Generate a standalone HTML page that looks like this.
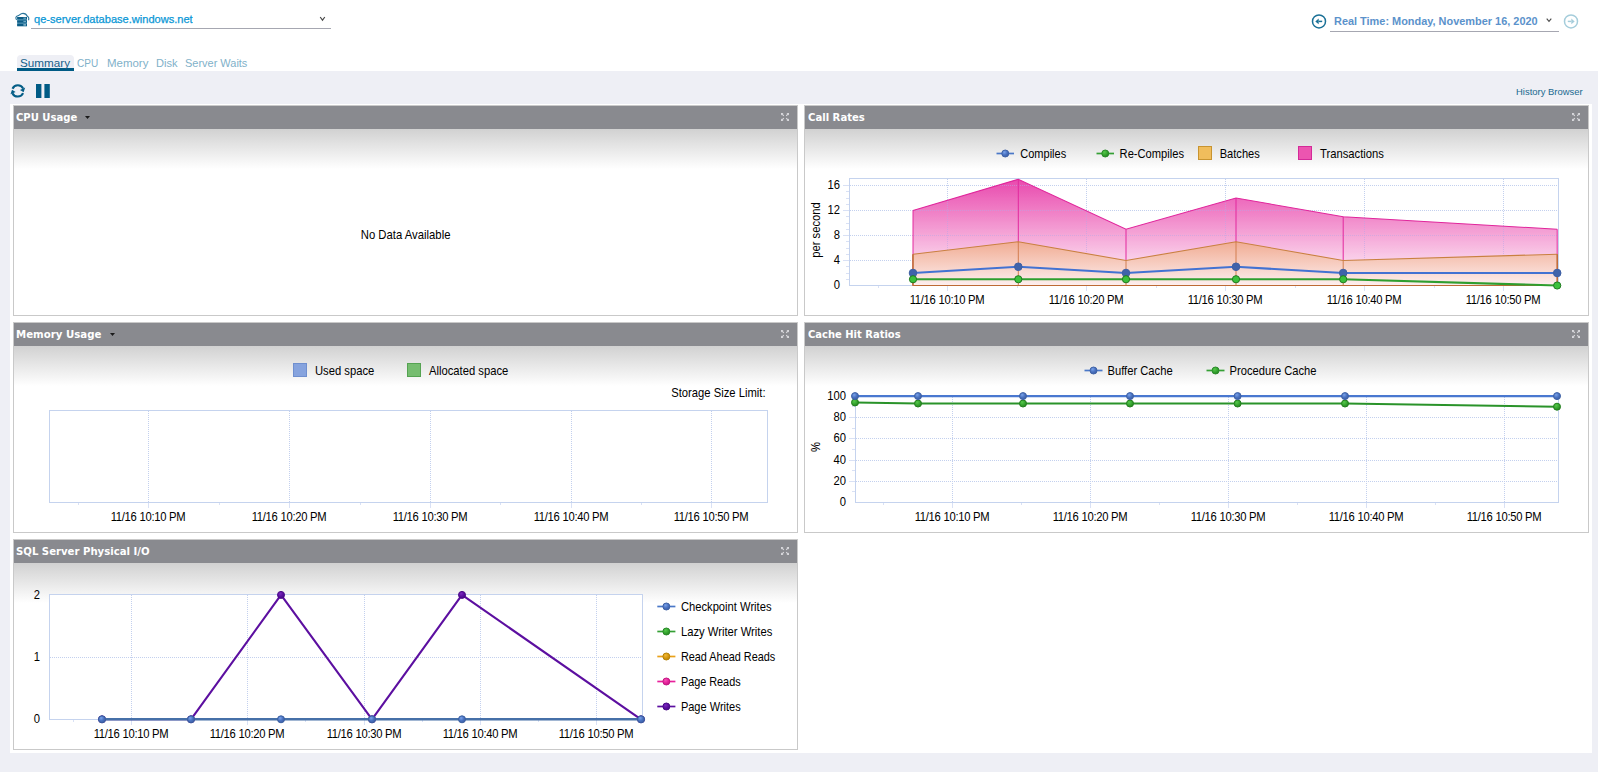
<!DOCTYPE html><html><head><meta charset="utf-8"><title>Summary</title><style>
html,body{margin:0;padding:0}
body{width:1598px;height:772px;overflow:hidden;background:#eeeff5;position:relative;font-family:"Liberation Sans", Arial, sans-serif;}
.abs{position:absolute}
#top{left:0;top:0;width:1598px;height:71px;background:#fff}
#wrap{left:10px;top:104px;width:1582px;height:649px;background:#fff}
.panel{position:absolute;width:783px;height:209px;border:1px solid #c9c9c9;background:#fff;overflow:hidden}
.ph{position:absolute;left:0;top:0;width:100%;height:23px;background:#898a8f}
.pb{position:absolute;left:0;top:23px;width:100%;height:40px;background:linear-gradient(#d1d1d1,#fff)}
.pt{position:absolute;height:23px;line-height:22px;font-family:"DejaVu Sans Condensed", "DejaVu Sans", sans-serif;font-weight:bold;font-size:11px;color:#fff;white-space:nowrap}
.tab{position:absolute;top:56px;height:14px;line-height:14px;font-size:11.5px;color:#7fb1c9;white-space:nowrap}
svg text{font-family:"Liberation Sans", Arial, sans-serif;font-size:11.25px;fill:#000}
svg text.xl{letter-spacing:-0.27px}
</style></head><body>
<div id="top" class="abs"></div>
<div class="abs" id="srv" style="left:34.13px;transform:scaleX(1.0059);transform-origin:0 0;top:12px;font-size:11px;line-height:14px;color:#0a97d6;-webkit-text-stroke:0.25px #0a97d6;white-space:nowrap">qe-server.database.windows.net</div>
<div class="abs" style="left:31px;top:28px;width:300px;height:1px;background:#a6a7b1"></div>
<div class="abs" style="left:1330px;top:31px;width:229px;height:1px;background:#a6a7b1"></div>
<div class="abs" id="rt" style="left:1334.06px;transform:scaleX(0.9261);transform-origin:0 0;top:14px;font-size:11.8px;line-height:14px;font-weight:bold;color:#5b92cb;white-space:nowrap">Real Time: Monday, November 16, 2020</div>
<div class="abs" style="left:17px;top:55px;width:57px;height:16px;background:#eeeff5;border-radius:4px 4px 0 0"></div>
<div class="abs" style="left:17px;top:68px;width:57px;height:3px;background:#005b85"></div>
<div class="tab" id="t1" style="left:19.51px;transform:scaleX(1.0158);transform-origin:0 0;;color:#16608a">Summary</div>
<div class="tab" id="t2" style="left:77.41px;transform:scaleX(0.8716);transform-origin:0 0;">CPU</div>
<div class="tab" id="t3" style="left:106.55px;transform:scaleX(0.9960);transform-origin:0 0;">Memory</div>
<div class="tab" id="t4" style="left:155.72px;transform:scaleX(0.9638);transform-origin:0 0;">Disk</div>
<div class="tab" id="t5" style="left:184.61px;transform:scaleX(0.9534);transform-origin:0 0;">Server Waits</div>
<div class="abs" id="hb" style="left:1516.39px;transform:scaleX(0.9641);transform-origin:0 0;top:86px;font-size:9.8px;line-height:12px;color:#1b6a90;white-space:nowrap">History Browser</div>
<div id="wrap" class="abs"></div>
<div class="panel" style="left:13px;top:105px"><div class="ph"></div><div class="pb"></div></div><div class="pt" id="pt0" style="left:16.24px;transform:scaleX(1.0137);transform-origin:0 0;top:107px">CPU Usage</div>
<div class="panel" style="left:804px;top:105px"><div class="ph"></div><div class="pb"></div></div><div class="pt" id="pt1" style="left:808.14px;transform:scaleX(1.0192);transform-origin:0 0;top:107px">Call Rates</div>
<div class="panel" style="left:13px;top:322px"><div class="ph"></div><div class="pb"></div></div><div class="pt" id="pt2" style="left:16.45px;transform:scaleX(1.0304);transform-origin:0 0;top:324px">Memory Usage</div>
<div class="panel" style="left:804px;top:322px"><div class="ph"></div><div class="pb"></div></div><div class="pt" id="pt3" style="left:808.04px;transform:scaleX(1.0073);transform-origin:0 0;top:324px">Cache Hit Ratios</div>
<div class="panel" style="left:13px;top:539px"><div class="ph"></div><div class="pb"></div></div><div class="pt" id="pt4" style="left:16.11px;transform:scaleX(1.0227);transform-origin:0 0;top:541px">SQL Server Physical I/O</div>
<svg class="abs" style="left:0;top:0" width="1598" height="772" viewBox="0 0 1598 772">
<defs>
<radialGradient id="mb" cx="0.38" cy="0.32" r="0.7"><stop offset="0" stop-color="#79a2ea"/><stop offset="0.55" stop-color="#4a72c0"/><stop offset="1" stop-color="#3c5ea6"/></radialGradient>
<radialGradient id="mg" cx="0.38" cy="0.32" r="0.7"><stop offset="0" stop-color="#55c84a"/><stop offset="0.55" stop-color="#37a631"/><stop offset="1" stop-color="#25831f"/></radialGradient>
<radialGradient id="mp" cx="0.38" cy="0.32" r="0.7"><stop offset="0" stop-color="#7a2ac0"/><stop offset="0.55" stop-color="#5c0fa0"/><stop offset="1" stop-color="#480a84"/></radialGradient>
<radialGradient id="mo" cx="0.38" cy="0.32" r="0.7"><stop offset="0" stop-color="#f0b838"/><stop offset="0.55" stop-color="#d89a10"/><stop offset="1" stop-color="#b88408"/></radialGradient>
<radialGradient id="mk" cx="0.38" cy="0.32" r="0.7"><stop offset="0" stop-color="#f455b4"/><stop offset="0.55" stop-color="#e8229c"/><stop offset="1" stop-color="#c41884"/></radialGradient>
<linearGradient id="gp" x1="0" y1="178" x2="0" y2="285" gradientUnits="userSpaceOnUse"><stop offset="0" stop-color="#e948ad"/><stop offset="1" stop-color="#fffafd"/></linearGradient>
<linearGradient id="go" x1="0" y1="240" x2="0" y2="285" gradientUnits="userSpaceOnUse"><stop offset="0" stop-color="#f0a98f"/><stop offset="1" stop-color="#fdeeee"/></linearGradient>
</defs>
<text id="s1" transform="translate(405.60,239) scale(1.006,1.06)" text-anchor="middle" >No Data Available</text>
<rect x="849.5" y="178.5" width="709" height="107" fill="#fff" stroke="#c5d3ee" shape-rendering="crispEdges"/>
<line x1="947.5" y1="179" x2="947.5" y2="285" stroke="#c3d0ee" stroke-dasharray="1 1" shape-rendering="crispEdges"/>
<line x1="1086.5" y1="179" x2="1086.5" y2="285" stroke="#c3d0ee" stroke-dasharray="1 1" shape-rendering="crispEdges"/>
<line x1="1225.5" y1="179" x2="1225.5" y2="285" stroke="#c3d0ee" stroke-dasharray="1 1" shape-rendering="crispEdges"/>
<line x1="1364.5" y1="179" x2="1364.5" y2="285" stroke="#c3d0ee" stroke-dasharray="1 1" shape-rendering="crispEdges"/>
<line x1="1503.5" y1="179" x2="1503.5" y2="285" stroke="#c3d0ee" stroke-dasharray="1 1" shape-rendering="crispEdges"/>
<line x1="850" y1="185.5" x2="1558" y2="185.5" stroke="#c3d0ee" stroke-dasharray="1 1" shape-rendering="crispEdges"/>
<line x1="850" y1="210.5" x2="1558" y2="210.5" stroke="#c3d0ee" stroke-dasharray="1 1" shape-rendering="crispEdges"/>
<line x1="850" y1="235.5" x2="1558" y2="235.5" stroke="#c3d0ee" stroke-dasharray="1 1" shape-rendering="crispEdges"/>
<line x1="850" y1="260.5" x2="1558" y2="260.5" stroke="#c3d0ee" stroke-dasharray="1 1" shape-rendering="crispEdges"/>
<clipPath id="cpk"><polygon points="913,210.5 1018.3,179.25 1126,229.25 1236,198.0 1343.2,216.75 1557.2,229.25 1557.2,285.5 913,285.5"/></clipPath>
<polygon points="913,210.5 1018.3,179.25 1126,229.25 1236,198.0 1343.2,216.75 1557.2,229.25 1557.2,285.5 913,285.5" fill="url(#gp)"/>
<g clip-path="url(#cpk)" opacity="0.55">
<line x1="947.5" y1="179" x2="947.5" y2="285" stroke="#b9a6e6" stroke-dasharray="1 1" shape-rendering="crispEdges"/>
<line x1="1086.5" y1="179" x2="1086.5" y2="285" stroke="#b9a6e6" stroke-dasharray="1 1" shape-rendering="crispEdges"/>
<line x1="1225.5" y1="179" x2="1225.5" y2="285" stroke="#b9a6e6" stroke-dasharray="1 1" shape-rendering="crispEdges"/>
<line x1="1364.5" y1="179" x2="1364.5" y2="285" stroke="#b9a6e6" stroke-dasharray="1 1" shape-rendering="crispEdges"/>
<line x1="1503.5" y1="179" x2="1503.5" y2="285" stroke="#b9a6e6" stroke-dasharray="1 1" shape-rendering="crispEdges"/>
<line x1="850" y1="185.5" x2="1558" y2="185.5" stroke="#b9a6e6" stroke-dasharray="1 1" shape-rendering="crispEdges"/>
<line x1="850" y1="210.5" x2="1558" y2="210.5" stroke="#b9a6e6" stroke-dasharray="1 1" shape-rendering="crispEdges"/>
<line x1="850" y1="235.5" x2="1558" y2="235.5" stroke="#b9a6e6" stroke-dasharray="1 1" shape-rendering="crispEdges"/>
<line x1="850" y1="260.5" x2="1558" y2="260.5" stroke="#b9a6e6" stroke-dasharray="1 1" shape-rendering="crispEdges"/>
</g>
<line x1="913" y1="210.5" x2="913" y2="285.5" stroke="#e2289e" stroke-width="1"/>
<line x1="1018.3" y1="179.25" x2="1018.3" y2="285.5" stroke="#e2289e" stroke-width="1"/>
<line x1="1126" y1="229.25" x2="1126" y2="285.5" stroke="#e2289e" stroke-width="1"/>
<line x1="1236" y1="198.0" x2="1236" y2="285.5" stroke="#e2289e" stroke-width="1"/>
<line x1="1343.2" y1="216.75" x2="1343.2" y2="285.5" stroke="#e2289e" stroke-width="1"/>
<line x1="1557.2" y1="229.25" x2="1557.2" y2="285.5" stroke="#e2289e" stroke-width="1"/>
<polyline points="913,210.5 1018.3,179.25 1126,229.25 1236,198.0 1343.2,216.75 1557.2,229.25" fill="none" stroke="#e0259b" stroke-width="1.1"/>
<polygon points="913,254.25 1018.3,241.75 1126,260.5 1236,241.75 1343.2,260.5 1557.2,254.25 1557.2,285.5 913,285.5" fill="url(#go)"/>
<line x1="913" y1="254.25" x2="913" y2="285.5" stroke="#d27e50" stroke-width="1"/>
<line x1="1018.3" y1="241.75" x2="1018.3" y2="285.5" stroke="#d27e50" stroke-width="1"/>
<line x1="1126" y1="260.5" x2="1126" y2="285.5" stroke="#d27e50" stroke-width="1"/>
<line x1="1236" y1="241.75" x2="1236" y2="285.5" stroke="#d27e50" stroke-width="1"/>
<line x1="1343.2" y1="260.5" x2="1343.2" y2="285.5" stroke="#d27e50" stroke-width="1"/>
<line x1="1557.2" y1="254.25" x2="1557.2" y2="285.5" stroke="#d27e50" stroke-width="1"/>
<polyline points="913,254.25 1018.3,241.75 1126,260.5 1236,241.75 1343.2,260.5 1557.2,254.25" fill="none" stroke="#c98040" stroke-width="1.1"/>
<line x1="913" y1="254.25" x2="913" y2="285.5" stroke="#bb672c" stroke-width="1.2"/>
<line x1="1557.2" y1="254.25" x2="1557.2" y2="285.5" stroke="#bb672c" stroke-width="1.2"/>
<line x1="912.5" y1="285.5" x2="1557.7" y2="285.5" stroke="#bd6a34" stroke-width="1.1"/>
<polyline points="913,273.0 1018.3,266.75 1126,273.0 1236,266.75 1343.2,273.0 1557.2,273.0" fill="none" stroke="#4272d2" stroke-width="2.1" stroke-linejoin="round"/>
<circle cx="913" cy="273.0" r="3.8" fill="#4063aa" stroke="#3d5fa4" stroke-width="1"/>
<circle cx="1018.3" cy="266.75" r="3.8" fill="#4063aa" stroke="#3d5fa4" stroke-width="1"/>
<circle cx="1126" cy="273.0" r="3.8" fill="#4063aa" stroke="#3d5fa4" stroke-width="1"/>
<circle cx="1236" cy="266.75" r="3.8" fill="#4063aa" stroke="#3d5fa4" stroke-width="1"/>
<circle cx="1343.2" cy="273.0" r="3.8" fill="#4063aa" stroke="#3d5fa4" stroke-width="1"/>
<circle cx="1557.2" cy="273.0" r="3.8" fill="#4063aa" stroke="#3d5fa4" stroke-width="1"/>
<polyline points="913,279.25 1018.3,279.25 1126,279.25 1236,279.25 1343.2,279.25 1557.2,285.5" fill="none" stroke="#2f9e2f" stroke-width="2.1" stroke-linejoin="round"/>
<circle cx="913" cy="279.25" r="3.6" fill="#3cc13c" stroke="#1f7a1f" stroke-width="1"/>
<circle cx="1018.3" cy="279.25" r="3.6" fill="#3cc13c" stroke="#1f7a1f" stroke-width="1"/>
<circle cx="1126" cy="279.25" r="3.6" fill="#3cc13c" stroke="#1f7a1f" stroke-width="1"/>
<circle cx="1236" cy="279.25" r="3.6" fill="#3cc13c" stroke="#1f7a1f" stroke-width="1"/>
<circle cx="1343.2" cy="279.25" r="3.6" fill="#3cc13c" stroke="#1f7a1f" stroke-width="1"/>
<circle cx="1557.2" cy="285.5" r="3.6" fill="#3cc13c" stroke="#1f7a1f" stroke-width="1"/>
<line x1="947.5" y1="286" x2="947.5" y2="291" stroke="#d9e1f5" shape-rendering="crispEdges"/>
<line x1="1086.5" y1="286" x2="1086.5" y2="291" stroke="#d9e1f5" shape-rendering="crispEdges"/>
<line x1="1225.5" y1="286" x2="1225.5" y2="291" stroke="#d9e1f5" shape-rendering="crispEdges"/>
<line x1="1364.5" y1="286" x2="1364.5" y2="291" stroke="#d9e1f5" shape-rendering="crispEdges"/>
<line x1="1503.5" y1="286" x2="1503.5" y2="291" stroke="#d9e1f5" shape-rendering="crispEdges"/>
<line x1="878.5" y1="286" x2="878.5" y2="288" stroke="#d9e1f5" shape-rendering="crispEdges"/>
<line x1="1017.5" y1="286" x2="1017.5" y2="288" stroke="#d9e1f5" shape-rendering="crispEdges"/>
<line x1="1156.5" y1="286" x2="1156.5" y2="288" stroke="#d9e1f5" shape-rendering="crispEdges"/>
<line x1="1295.5" y1="286" x2="1295.5" y2="288" stroke="#d9e1f5" shape-rendering="crispEdges"/>
<line x1="1434.5" y1="286" x2="1434.5" y2="288" stroke="#d9e1f5" shape-rendering="crispEdges"/>
<line x1="843" y1="185.5" x2="849" y2="185.5" stroke="#d9e1f5" shape-rendering="crispEdges"/>
<line x1="843" y1="210.5" x2="849" y2="210.5" stroke="#d9e1f5" shape-rendering="crispEdges"/>
<line x1="843" y1="235.5" x2="849" y2="235.5" stroke="#d9e1f5" shape-rendering="crispEdges"/>
<line x1="843" y1="260.5" x2="849" y2="260.5" stroke="#d9e1f5" shape-rendering="crispEdges"/>
<line x1="846" y1="191.5" x2="849" y2="191.5" stroke="#d9e1f5" shape-rendering="crispEdges"/>
<line x1="846" y1="198.5" x2="849" y2="198.5" stroke="#d9e1f5" shape-rendering="crispEdges"/>
<line x1="846" y1="204.5" x2="849" y2="204.5" stroke="#d9e1f5" shape-rendering="crispEdges"/>
<line x1="846" y1="216.5" x2="849" y2="216.5" stroke="#d9e1f5" shape-rendering="crispEdges"/>
<line x1="846" y1="223.5" x2="849" y2="223.5" stroke="#d9e1f5" shape-rendering="crispEdges"/>
<line x1="846" y1="229.5" x2="849" y2="229.5" stroke="#d9e1f5" shape-rendering="crispEdges"/>
<line x1="846" y1="241.5" x2="849" y2="241.5" stroke="#d9e1f5" shape-rendering="crispEdges"/>
<line x1="846" y1="248.5" x2="849" y2="248.5" stroke="#d9e1f5" shape-rendering="crispEdges"/>
<line x1="846" y1="254.5" x2="849" y2="254.5" stroke="#d9e1f5" shape-rendering="crispEdges"/>
<line x1="846" y1="266.5" x2="849" y2="266.5" stroke="#d9e1f5" shape-rendering="crispEdges"/>
<line x1="846" y1="273.5" x2="849" y2="273.5" stroke="#d9e1f5" shape-rendering="crispEdges"/>
<line x1="846" y1="279.5" x2="849" y2="279.5" stroke="#d9e1f5" shape-rendering="crispEdges"/>
<text id="s2" transform="translate(947.00,303.5) scale(1,1.06)" text-anchor="middle" class="xl">11/16 10:10 PM</text>
<text id="s3" transform="translate(1086.00,303.5) scale(1,1.06)" text-anchor="middle" class="xl">11/16 10:20 PM</text>
<text id="s4" transform="translate(1225.00,303.5) scale(1,1.06)" text-anchor="middle" class="xl">11/16 10:30 PM</text>
<text id="s5" transform="translate(1364.00,303.5) scale(1,1.06)" text-anchor="middle" class="xl">11/16 10:40 PM</text>
<text id="s6" transform="translate(1503.00,303.5) scale(1,1.06)" text-anchor="middle" class="xl">11/16 10:50 PM</text>
<text id="s7" transform="translate(840.00,189) scale(1,1.06)" text-anchor="end">16</text>
<text id="s8" transform="translate(840.00,214) scale(1,1.06)" text-anchor="end">12</text>
<text id="s9" transform="translate(840.00,239) scale(1,1.06)" text-anchor="end">8</text>
<text id="s10" transform="translate(840.00,264) scale(1,1.06)" text-anchor="end">4</text>
<text id="s11" transform="translate(840.00,289) scale(1,1.06)" text-anchor="end">0</text>
<text transform="translate(820,230) rotate(-90) scale(1,1.06)" text-anchor="middle">per second</text>
<line x1="996.5" y1="153.5" x2="1014" y2="153.5" stroke="#4a78c8" stroke-width="1.7"/>
<circle cx="1005.25" cy="153.5" r="3.5" fill="url(#mb)" stroke="#3f62a6"/>
<text id="s12" transform="translate(1020.30,157.5) scale(0.98,1.06)">Compiles</text>
<line x1="1096.5" y1="153.5" x2="1114" y2="153.5" stroke="#35a035" stroke-width="1.7"/>
<circle cx="1105.25" cy="153.5" r="3.5" fill="url(#mg)" stroke="#2a8a2a"/>
<text id="s13" transform="translate(1119.60,157.5) scale(0.992,1.06)">Re-Compiles</text>
<rect x="1198.5" y="146.5" width="13" height="13" fill="#f0bd5c" stroke="#c89430" shape-rendering="crispEdges"/>
<text id="s14" transform="translate(1219.70,157.6) scale(0.988,1.06)">Batches</text>
<rect x="1298.5" y="146.5" width="13" height="13" fill="#ec55b0" stroke="#d42a98" shape-rendering="crispEdges"/>
<text id="s15" transform="translate(1320.00,157.6) scale(1,1.06)">Transactions</text>
<rect x="49.5" y="410.5" width="718" height="92" fill="#fff" stroke="#c5d3ee" shape-rendering="crispEdges"/>
<line x1="148.5" y1="411" x2="148.5" y2="502" stroke="#c3d0ee" stroke-dasharray="1 1" shape-rendering="crispEdges"/>
<line x1="289.5" y1="411" x2="289.5" y2="502" stroke="#c3d0ee" stroke-dasharray="1 1" shape-rendering="crispEdges"/>
<line x1="430.5" y1="411" x2="430.5" y2="502" stroke="#c3d0ee" stroke-dasharray="1 1" shape-rendering="crispEdges"/>
<line x1="571.5" y1="411" x2="571.5" y2="502" stroke="#c3d0ee" stroke-dasharray="1 1" shape-rendering="crispEdges"/>
<line x1="711.5" y1="411" x2="711.5" y2="502" stroke="#c3d0ee" stroke-dasharray="1 1" shape-rendering="crispEdges"/>
<line x1="148.5" y1="503" x2="148.5" y2="508" stroke="#d9e1f5" shape-rendering="crispEdges"/>
<line x1="289.5" y1="503" x2="289.5" y2="508" stroke="#d9e1f5" shape-rendering="crispEdges"/>
<line x1="430.5" y1="503" x2="430.5" y2="508" stroke="#d9e1f5" shape-rendering="crispEdges"/>
<line x1="571.5" y1="503" x2="571.5" y2="508" stroke="#d9e1f5" shape-rendering="crispEdges"/>
<line x1="711.5" y1="503" x2="711.5" y2="508" stroke="#d9e1f5" shape-rendering="crispEdges"/>
<line x1="78.5" y1="503" x2="78.5" y2="505" stroke="#d9e1f5" shape-rendering="crispEdges"/>
<line x1="219.5" y1="503" x2="219.5" y2="505" stroke="#d9e1f5" shape-rendering="crispEdges"/>
<line x1="360.5" y1="503" x2="360.5" y2="505" stroke="#d9e1f5" shape-rendering="crispEdges"/>
<line x1="500.5" y1="503" x2="500.5" y2="505" stroke="#d9e1f5" shape-rendering="crispEdges"/>
<line x1="641.5" y1="503" x2="641.5" y2="505" stroke="#d9e1f5" shape-rendering="crispEdges"/>
<text id="s16" transform="translate(148.00,520.5) scale(1,1.06)" text-anchor="middle" class="xl">11/16 10:10 PM</text>
<text id="s17" transform="translate(289.00,520.5) scale(1,1.06)" text-anchor="middle" class="xl">11/16 10:20 PM</text>
<text id="s18" transform="translate(430.00,520.5) scale(1,1.06)" text-anchor="middle" class="xl">11/16 10:30 PM</text>
<text id="s19" transform="translate(571.00,520.5) scale(1,1.06)" text-anchor="middle" class="xl">11/16 10:40 PM</text>
<text id="s20" transform="translate(711.00,520.5) scale(1,1.06)" text-anchor="middle" class="xl">11/16 10:50 PM</text>
<rect x="293.5" y="363.5" width="13" height="13" fill="#86a3de" stroke="#6f8fcf" shape-rendering="crispEdges"/>
<text id="s21" transform="translate(315.00,374.6) scale(1,1.06)">Used space</text>
<rect x="407.5" y="363.5" width="13" height="13" fill="#76bd70" stroke="#55a352" shape-rendering="crispEdges"/>
<text id="s22" transform="translate(429.00,374.6) scale(1,1.06)">Allocated space</text>
<text id="s23" transform="translate(765.50,397) scale(1,1.06)" text-anchor="end">Storage Size Limit:</text>
<rect x="855.5" y="396.5" width="703" height="106" fill="#fff" stroke="#c5d3ee" shape-rendering="crispEdges"/>
<line x1="952.5" y1="397" x2="952.5" y2="502" stroke="#c3d0ee" stroke-dasharray="1 1" shape-rendering="crispEdges"/>
<line x1="1090.5" y1="397" x2="1090.5" y2="502" stroke="#c3d0ee" stroke-dasharray="1 1" shape-rendering="crispEdges"/>
<line x1="1228.5" y1="397" x2="1228.5" y2="502" stroke="#c3d0ee" stroke-dasharray="1 1" shape-rendering="crispEdges"/>
<line x1="1366.5" y1="397" x2="1366.5" y2="502" stroke="#c3d0ee" stroke-dasharray="1 1" shape-rendering="crispEdges"/>
<line x1="1504.5" y1="397" x2="1504.5" y2="502" stroke="#c3d0ee" stroke-dasharray="1 1" shape-rendering="crispEdges"/>
<line x1="856" y1="417.5" x2="1558" y2="417.5" stroke="#c3d0ee" stroke-dasharray="1 1" shape-rendering="crispEdges"/>
<line x1="856" y1="438.5" x2="1558" y2="438.5" stroke="#c3d0ee" stroke-dasharray="1 1" shape-rendering="crispEdges"/>
<line x1="856" y1="460.5" x2="1558" y2="460.5" stroke="#c3d0ee" stroke-dasharray="1 1" shape-rendering="crispEdges"/>
<line x1="856" y1="481.5" x2="1558" y2="481.5" stroke="#c3d0ee" stroke-dasharray="1 1" shape-rendering="crispEdges"/>
<line x1="952.5" y1="503" x2="952.5" y2="508" stroke="#d9e1f5" shape-rendering="crispEdges"/>
<line x1="1090.5" y1="503" x2="1090.5" y2="508" stroke="#d9e1f5" shape-rendering="crispEdges"/>
<line x1="1228.5" y1="503" x2="1228.5" y2="508" stroke="#d9e1f5" shape-rendering="crispEdges"/>
<line x1="1366.5" y1="503" x2="1366.5" y2="508" stroke="#d9e1f5" shape-rendering="crispEdges"/>
<line x1="1504.5" y1="503" x2="1504.5" y2="508" stroke="#d9e1f5" shape-rendering="crispEdges"/>
<line x1="883.5" y1="503" x2="883.5" y2="505" stroke="#d9e1f5" shape-rendering="crispEdges"/>
<line x1="1021.5" y1="503" x2="1021.5" y2="505" stroke="#d9e1f5" shape-rendering="crispEdges"/>
<line x1="1159.5" y1="503" x2="1159.5" y2="505" stroke="#d9e1f5" shape-rendering="crispEdges"/>
<line x1="1297.5" y1="503" x2="1297.5" y2="505" stroke="#d9e1f5" shape-rendering="crispEdges"/>
<line x1="1435.5" y1="503" x2="1435.5" y2="505" stroke="#d9e1f5" shape-rendering="crispEdges"/>
<line x1="849" y1="417.5" x2="855" y2="417.5" stroke="#d9e1f5" shape-rendering="crispEdges"/>
<line x1="849" y1="438.5" x2="855" y2="438.5" stroke="#d9e1f5" shape-rendering="crispEdges"/>
<line x1="849" y1="460.5" x2="855" y2="460.5" stroke="#d9e1f5" shape-rendering="crispEdges"/>
<line x1="849" y1="481.5" x2="855" y2="481.5" stroke="#d9e1f5" shape-rendering="crispEdges"/>
<line x1="852" y1="406.5" x2="855" y2="406.5" stroke="#d9e1f5" shape-rendering="crispEdges"/>
<line x1="852" y1="428.5" x2="855" y2="428.5" stroke="#d9e1f5" shape-rendering="crispEdges"/>
<line x1="852" y1="449.5" x2="855" y2="449.5" stroke="#d9e1f5" shape-rendering="crispEdges"/>
<line x1="852" y1="470.5" x2="855" y2="470.5" stroke="#d9e1f5" shape-rendering="crispEdges"/>
<line x1="852" y1="491.5" x2="855" y2="491.5" stroke="#d9e1f5" shape-rendering="crispEdges"/>
<text id="s24" transform="translate(952.00,520.5) scale(1,1.06)" text-anchor="middle" class="xl">11/16 10:10 PM</text>
<text id="s25" transform="translate(1090.00,520.5) scale(1,1.06)" text-anchor="middle" class="xl">11/16 10:20 PM</text>
<text id="s26" transform="translate(1228.00,520.5) scale(1,1.06)" text-anchor="middle" class="xl">11/16 10:30 PM</text>
<text id="s27" transform="translate(1366.00,520.5) scale(1,1.06)" text-anchor="middle" class="xl">11/16 10:40 PM</text>
<text id="s28" transform="translate(1504.00,520.5) scale(1,1.06)" text-anchor="middle" class="xl">11/16 10:50 PM</text>
<text id="s29" transform="translate(846.00,400) scale(1,1.06)" text-anchor="end">100</text>
<text id="s30" transform="translate(846.00,421) scale(1,1.06)" text-anchor="end">80</text>
<text id="s31" transform="translate(846.00,442) scale(1,1.06)" text-anchor="end">60</text>
<text id="s32" transform="translate(846.00,464) scale(1,1.06)" text-anchor="end">40</text>
<text id="s33" transform="translate(846.00,485) scale(1,1.06)" text-anchor="end">20</text>
<text id="s34" transform="translate(846.00,506) scale(1,1.06)" text-anchor="end">0</text>
<text transform="translate(820,447) rotate(-90) scale(1,1.06)" text-anchor="middle">%</text>
<polyline points="855,402.46000000000004 918,403.52000000000004 1023,403.52000000000004 1130,403.52000000000004 1237.6,403.52000000000004 1345,403.52000000000004 1557,406.70000000000005" fill="none" stroke="#2a932a" stroke-width="2.1" stroke-linejoin="round"/>
<circle cx="855" cy="402.46000000000004" r="3.5" fill="url(#mg)" stroke="#23801f" stroke-width="1"/>
<circle cx="918" cy="403.52000000000004" r="3.5" fill="url(#mg)" stroke="#23801f" stroke-width="1"/>
<circle cx="1023" cy="403.52000000000004" r="3.5" fill="url(#mg)" stroke="#23801f" stroke-width="1"/>
<circle cx="1130" cy="403.52000000000004" r="3.5" fill="url(#mg)" stroke="#23801f" stroke-width="1"/>
<circle cx="1237.6" cy="403.52000000000004" r="3.5" fill="url(#mg)" stroke="#23801f" stroke-width="1"/>
<circle cx="1345" cy="403.52000000000004" r="3.5" fill="url(#mg)" stroke="#23801f" stroke-width="1"/>
<circle cx="1557" cy="406.70000000000005" r="3.5" fill="url(#mg)" stroke="#23801f" stroke-width="1"/>
<polyline points="855,396.1 918,396.1 1023,396.1 1130,396.1 1237.6,396.1 1345,396.1 1557,396.1" fill="none" stroke="#4a78d0" stroke-width="2.3" stroke-linejoin="round"/>
<circle cx="855" cy="396.1" r="3.5" fill="url(#mb)" stroke="#3f62a6" stroke-width="1"/>
<circle cx="918" cy="396.1" r="3.5" fill="url(#mb)" stroke="#3f62a6" stroke-width="1"/>
<circle cx="1023" cy="396.1" r="3.5" fill="url(#mb)" stroke="#3f62a6" stroke-width="1"/>
<circle cx="1130" cy="396.1" r="3.5" fill="url(#mb)" stroke="#3f62a6" stroke-width="1"/>
<circle cx="1237.6" cy="396.1" r="3.5" fill="url(#mb)" stroke="#3f62a6" stroke-width="1"/>
<circle cx="1345" cy="396.1" r="3.5" fill="url(#mb)" stroke="#3f62a6" stroke-width="1"/>
<circle cx="1557" cy="396.1" r="3.5" fill="url(#mb)" stroke="#3f62a6" stroke-width="1"/>
<line x1="1084.5" y1="370.5" x2="1102.5" y2="370.5" stroke="#4a78c8" stroke-width="1.7"/>
<circle cx="1093.5" cy="370.5" r="3.5" fill="url(#mb)" stroke="#3f62a6"/>
<text id="s35" transform="translate(1107.50,374.5) scale(0.996,1.06)">Buffer Cache</text>
<line x1="1206.5" y1="370.5" x2="1224.5" y2="370.5" stroke="#35a035" stroke-width="1.7"/>
<circle cx="1215.5" cy="370.5" r="3.5" fill="url(#mg)" stroke="#2a8a2a"/>
<text id="s36" transform="translate(1229.60,374.5) scale(0.994,1.06)">Procedure Cache</text>
<rect x="49.5" y="594.5" width="593" height="125" fill="#fff" stroke="#c5d3ee" shape-rendering="crispEdges"/>
<line x1="131.5" y1="595" x2="131.5" y2="719" stroke="#c3d0ee" stroke-dasharray="1 1" shape-rendering="crispEdges"/>
<line x1="247.5" y1="595" x2="247.5" y2="719" stroke="#c3d0ee" stroke-dasharray="1 1" shape-rendering="crispEdges"/>
<line x1="364.5" y1="595" x2="364.5" y2="719" stroke="#c3d0ee" stroke-dasharray="1 1" shape-rendering="crispEdges"/>
<line x1="480.5" y1="595" x2="480.5" y2="719" stroke="#c3d0ee" stroke-dasharray="1 1" shape-rendering="crispEdges"/>
<line x1="596.5" y1="595" x2="596.5" y2="719" stroke="#c3d0ee" stroke-dasharray="1 1" shape-rendering="crispEdges"/>
<line x1="50" y1="657.5" x2="642" y2="657.5" stroke="#c3d0ee" stroke-dasharray="1 1" shape-rendering="crispEdges"/>
<line x1="131.5" y1="720" x2="131.5" y2="725" stroke="#d9e1f5" shape-rendering="crispEdges"/>
<line x1="247.5" y1="720" x2="247.5" y2="725" stroke="#d9e1f5" shape-rendering="crispEdges"/>
<line x1="364.5" y1="720" x2="364.5" y2="725" stroke="#d9e1f5" shape-rendering="crispEdges"/>
<line x1="480.5" y1="720" x2="480.5" y2="725" stroke="#d9e1f5" shape-rendering="crispEdges"/>
<line x1="596.5" y1="720" x2="596.5" y2="725" stroke="#d9e1f5" shape-rendering="crispEdges"/>
<line x1="73.5" y1="720" x2="73.5" y2="722" stroke="#d9e1f5" shape-rendering="crispEdges"/>
<line x1="189.5" y1="720" x2="189.5" y2="722" stroke="#d9e1f5" shape-rendering="crispEdges"/>
<line x1="305.5" y1="720" x2="305.5" y2="722" stroke="#d9e1f5" shape-rendering="crispEdges"/>
<line x1="422.5" y1="720" x2="422.5" y2="722" stroke="#d9e1f5" shape-rendering="crispEdges"/>
<line x1="538.5" y1="720" x2="538.5" y2="722" stroke="#d9e1f5" shape-rendering="crispEdges"/>
<text id="s37" transform="translate(131.00,737.5) scale(1,1.06)" text-anchor="middle" class="xl">11/16 10:10 PM</text>
<text id="s38" transform="translate(247.00,737.5) scale(1,1.06)" text-anchor="middle" class="xl">11/16 10:20 PM</text>
<text id="s39" transform="translate(364.00,737.5) scale(1,1.06)" text-anchor="middle" class="xl">11/16 10:30 PM</text>
<text id="s40" transform="translate(480.00,737.5) scale(1,1.06)" text-anchor="middle" class="xl">11/16 10:40 PM</text>
<text id="s41" transform="translate(596.00,737.5) scale(1,1.06)" text-anchor="middle" class="xl">11/16 10:50 PM</text>
<text id="s42" transform="translate(40.00,599) scale(1,1.06)" text-anchor="end">2</text>
<text id="s43" transform="translate(40.00,661) scale(1,1.06)" text-anchor="end">1</text>
<text id="s44" transform="translate(40.00,723) scale(1,1.06)" text-anchor="end">0</text>
<polyline points="102,719.3 191,719.3 281,594.9 372,719.3 462,594.9 641,719.3" fill="none" stroke="#5c0fa0" stroke-width="2.1" stroke-linejoin="round"/>
<circle cx="102" cy="719.3" r="3.5" fill="url(#mp)" stroke="#4a0a88" stroke-width="1"/>
<circle cx="191" cy="719.3" r="3.5" fill="url(#mp)" stroke="#4a0a88" stroke-width="1"/>
<circle cx="281" cy="594.9" r="3.5" fill="url(#mp)" stroke="#4a0a88" stroke-width="1"/>
<circle cx="372" cy="719.3" r="3.5" fill="url(#mp)" stroke="#4a0a88" stroke-width="1"/>
<circle cx="462" cy="594.9" r="3.5" fill="url(#mp)" stroke="#4a0a88" stroke-width="1"/>
<circle cx="641" cy="719.3" r="3.5" fill="url(#mp)" stroke="#4a0a88" stroke-width="1"/>
<polyline points="102,719.3 191,719.3 281,719.3 372,719.3 462,719.3 641,719.3" fill="none" stroke="#4670a8" stroke-width="2.6" stroke-linejoin="round"/>
<circle cx="102" cy="719.3" r="3.5" fill="url(#mb)" stroke="#3a5fa0" stroke-width="1"/>
<circle cx="191" cy="719.3" r="3.5" fill="url(#mb)" stroke="#3a5fa0" stroke-width="1"/>
<circle cx="281" cy="719.3" r="3.5" fill="url(#mb)" stroke="#3a5fa0" stroke-width="1"/>
<circle cx="372" cy="719.3" r="3.5" fill="url(#mb)" stroke="#3a5fa0" stroke-width="1"/>
<circle cx="462" cy="719.3" r="3.5" fill="url(#mb)" stroke="#3a5fa0" stroke-width="1"/>
<circle cx="641" cy="719.3" r="3.5" fill="url(#mb)" stroke="#3a5fa0" stroke-width="1"/>
<line x1="657.3" y1="606.5" x2="675.4" y2="606.5" stroke="#4a78c8" stroke-width="1.7"/>
<circle cx="666.3499999999999" cy="606.5" r="3.5" fill="url(#mb)" stroke="#3f62a6"/>
<text id="s45" transform="translate(680.90,610.5) scale(0.996,1.06)">Checkpoint Writes</text>
<line x1="657.3" y1="631.5" x2="675.4" y2="631.5" stroke="#35a035" stroke-width="1.7"/>
<circle cx="666.3499999999999" cy="631.5" r="3.5" fill="url(#mg)" stroke="#2a8a2a"/>
<text id="s46" transform="translate(680.90,635.5) scale(1.0,1.06)">Lazy Writer Writes</text>
<line x1="657.3" y1="656.5" x2="675.4" y2="656.5" stroke="#eaa21a" stroke-width="1.7"/>
<circle cx="666.3499999999999" cy="656.5" r="3.5" fill="url(#mo)" stroke="#b88408"/>
<text id="s47" transform="translate(680.90,660.5) scale(0.969,1.06)">Read Ahead Reads</text>
<line x1="657.3" y1="681.5" x2="675.4" y2="681.5" stroke="#e8229c" stroke-width="1.7"/>
<circle cx="666.3499999999999" cy="681.5" r="3.5" fill="url(#mk)" stroke="#c41884"/>
<text id="s48" transform="translate(680.90,685.5) scale(0.965,1.06)">Page Reads</text>
<line x1="657.3" y1="706.5" x2="675.4" y2="706.5" stroke="#5c0fa0" stroke-width="1.7"/>
<circle cx="666.3499999999999" cy="706.5" r="3.5" fill="url(#mp)" stroke="#4a0a88"/>
<text id="s49" transform="translate(680.90,710.5) scale(0.981,1.06)">Page Writes</text>
<g id="srvicon">
<rect x="17.2" y="17" width="9.8" height="9.2" fill="#5a99b8"/>
<rect x="17.2" y="17" width="9.8" height="2.3" fill="#0b5c85"/><rect x="17.2" y="20.4" width="9.8" height="2.2" fill="#0b5c85"/><rect x="17.2" y="23.7" width="9.8" height="2.5" fill="#0b5c85"/>
<rect x="23.4" y="17.6" width="2.6" height="1.2" fill="#6ea8c4"/><rect x="23.4" y="20.9" width="2.6" height="1.2" fill="#6ea8c4"/><rect x="23.4" y="24.3" width="2.6" height="1.2" fill="#a9cfe0"/>
<path d="M16.9 19.6 C15.4 19.2 15.4 16 17.8 15.8 C19.4 15.8 20 13.3 23 13.3 C25.6 13.3 26.8 15 27.3 16.3 C28.8 16.8 29.1 18.8 28.5 20.2" fill="none" stroke="#2a759b" stroke-width="1.15"/>
</g>
<path d="M320.2 17 L322.5 20.2 L324.8 17" fill="none" stroke="#4a4a4a" stroke-width="1.15"/>
<path d="M1546.7 18.6 L1549 21.4 L1551.3 18.6" fill="none" stroke="#4a4a4a" stroke-width="1.1"/>
<circle cx="1319" cy="21.4" r="6.5" fill="none" stroke="#1a7096" stroke-width="1.5"/>
<path d="M1315.3 21.4 L1318.7 18.5 V24.299999999999997 Z" fill="#1a7096"/><path d="M1318.7 21.4 H1322.2" stroke="#1a7096" stroke-width="1.5" fill="none"/>
<circle cx="1571" cy="21.4" r="6.5" fill="none" stroke="#a5cddb" stroke-width="1.5"/>
<path d="M1574.7 21.4 L1571.3 18.5 V24.299999999999997 Z" fill="#a5cddb"/><path d="M1571.3 21.4 H1567.8" stroke="#a5cddb" stroke-width="1.5" fill="none"/>
<g fill="none" stroke="#045d86" stroke-width="2.1">
<path d="M12.5 88.7 A5.9 5.9 0 0 1 23.2 88.6"/><path d="M23.1 93.1 A5.9 5.9 0 0 1 12.4 93.2"/></g>
<path d="M20 89.9 L25.2 87.5 L23.6 92.2 Z" fill="#045d86"/><path d="M15.6 91.9 L10.5 94.3 L12 89.7 Z" fill="#045d86"/>
<rect x="36" y="84" width="5.4" height="14" fill="#005b85"/><rect x="44.4" y="84" width="5.4" height="14" fill="#005b85"/>
<path d="M85 116 h5 l-2.5 3 Z" fill="#1a1a1a"/>
<path d="M781 113 L783.5 113 L781 115.5 Z" fill="#d9d9dd"/><path d="M781.9 113.9 L783.8 115.8" stroke="#d9d9dd" stroke-width="1.15" fill="none"/><path d="M789 113 L786.5 113 L789 115.5 Z" fill="#d9d9dd"/><path d="M788.1 113.9 L786.2 115.8" stroke="#d9d9dd" stroke-width="1.15" fill="none"/><path d="M781 121 L783.5 121 L781 118.5 Z" fill="#d9d9dd"/><path d="M781.9 120.1 L783.8 118.2" stroke="#d9d9dd" stroke-width="1.15" fill="none"/><path d="M789 121 L786.5 121 L789 118.5 Z" fill="#d9d9dd"/><path d="M788.1 120.1 L786.2 118.2" stroke="#d9d9dd" stroke-width="1.15" fill="none"/>
<path d="M1572 113 L1574.5 113 L1572 115.5 Z" fill="#d9d9dd"/><path d="M1572.9 113.9 L1574.8 115.8" stroke="#d9d9dd" stroke-width="1.15" fill="none"/><path d="M1580 113 L1577.5 113 L1580 115.5 Z" fill="#d9d9dd"/><path d="M1579.1 113.9 L1577.2 115.8" stroke="#d9d9dd" stroke-width="1.15" fill="none"/><path d="M1572 121 L1574.5 121 L1572 118.5 Z" fill="#d9d9dd"/><path d="M1572.9 120.1 L1574.8 118.2" stroke="#d9d9dd" stroke-width="1.15" fill="none"/><path d="M1580 121 L1577.5 121 L1580 118.5 Z" fill="#d9d9dd"/><path d="M1579.1 120.1 L1577.2 118.2" stroke="#d9d9dd" stroke-width="1.15" fill="none"/>
<path d="M110 333 h5 l-2.5 3 Z" fill="#1a1a1a"/>
<path d="M781 330 L783.5 330 L781 332.5 Z" fill="#d9d9dd"/><path d="M781.9 330.9 L783.8 332.8" stroke="#d9d9dd" stroke-width="1.15" fill="none"/><path d="M789 330 L786.5 330 L789 332.5 Z" fill="#d9d9dd"/><path d="M788.1 330.9 L786.2 332.8" stroke="#d9d9dd" stroke-width="1.15" fill="none"/><path d="M781 338 L783.5 338 L781 335.5 Z" fill="#d9d9dd"/><path d="M781.9 337.1 L783.8 335.2" stroke="#d9d9dd" stroke-width="1.15" fill="none"/><path d="M789 338 L786.5 338 L789 335.5 Z" fill="#d9d9dd"/><path d="M788.1 337.1 L786.2 335.2" stroke="#d9d9dd" stroke-width="1.15" fill="none"/>
<path d="M1572 330 L1574.5 330 L1572 332.5 Z" fill="#d9d9dd"/><path d="M1572.9 330.9 L1574.8 332.8" stroke="#d9d9dd" stroke-width="1.15" fill="none"/><path d="M1580 330 L1577.5 330 L1580 332.5 Z" fill="#d9d9dd"/><path d="M1579.1 330.9 L1577.2 332.8" stroke="#d9d9dd" stroke-width="1.15" fill="none"/><path d="M1572 338 L1574.5 338 L1572 335.5 Z" fill="#d9d9dd"/><path d="M1572.9 337.1 L1574.8 335.2" stroke="#d9d9dd" stroke-width="1.15" fill="none"/><path d="M1580 338 L1577.5 338 L1580 335.5 Z" fill="#d9d9dd"/><path d="M1579.1 337.1 L1577.2 335.2" stroke="#d9d9dd" stroke-width="1.15" fill="none"/>
<path d="M781 547 L783.5 547 L781 549.5 Z" fill="#d9d9dd"/><path d="M781.9 547.9 L783.8 549.8" stroke="#d9d9dd" stroke-width="1.15" fill="none"/><path d="M789 547 L786.5 547 L789 549.5 Z" fill="#d9d9dd"/><path d="M788.1 547.9 L786.2 549.8" stroke="#d9d9dd" stroke-width="1.15" fill="none"/><path d="M781 555 L783.5 555 L781 552.5 Z" fill="#d9d9dd"/><path d="M781.9 554.1 L783.8 552.2" stroke="#d9d9dd" stroke-width="1.15" fill="none"/><path d="M789 555 L786.5 555 L789 552.5 Z" fill="#d9d9dd"/><path d="M788.1 554.1 L786.2 552.2" stroke="#d9d9dd" stroke-width="1.15" fill="none"/>
</svg>
</body></html>
